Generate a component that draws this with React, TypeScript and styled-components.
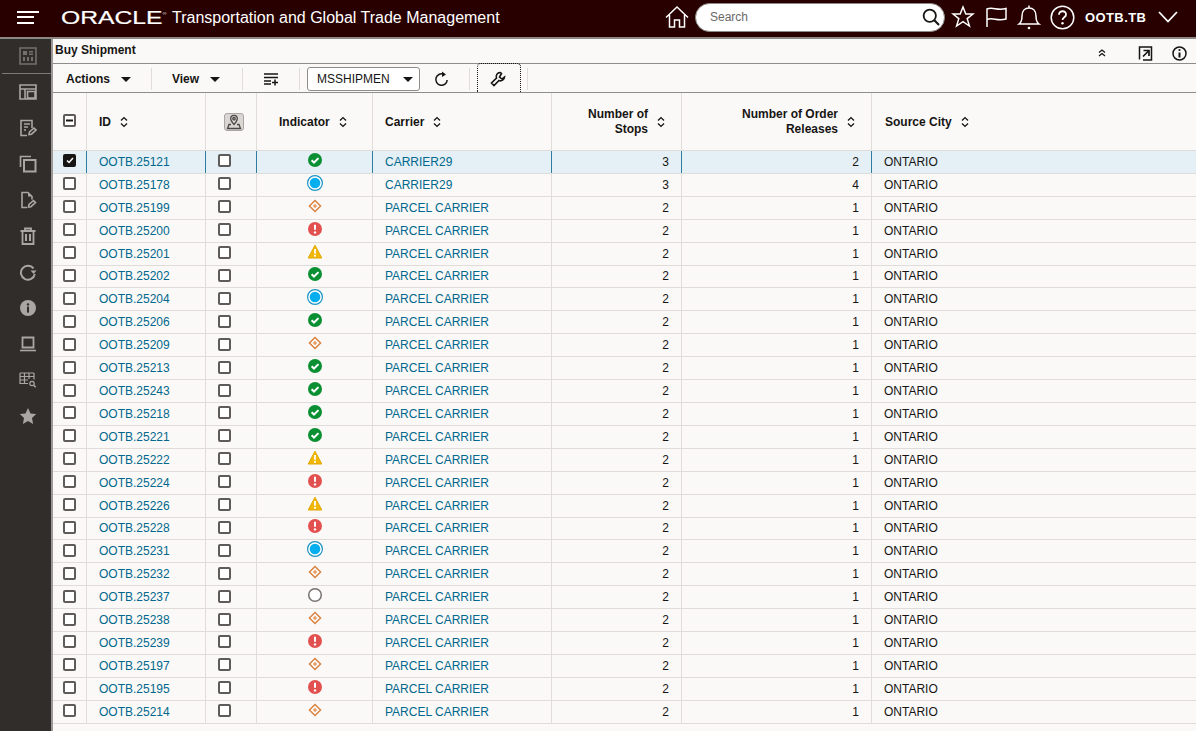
import React from "react";
import styled, { createGlobalStyle } from "styled-components";

const Global = createGlobalStyle`
  html, body { margin: 0; padding: 0; height: 100%; overflow: hidden; background: #fbf9f8; }
  * { box-sizing: border-box; }
  body { font-family: "Liberation Sans", Arial, sans-serif; font-size: 12px; color: #161513; }
`;

const Page = styled.div`
  width: 1196px; height: 731px; display: flex; flex-direction: column; overflow: hidden;
`;
const Header = styled.header`
  height: 39px; flex: none; background: #280000; border-bottom: 2px solid #8b8885;
  display: flex; align-items: center; color: #fff; padding-left: 17px;
`;
const Burger = styled.div`
  width: 22px; height: 13px; margin-top: -3px; display: flex; flex-direction: column; justify-content: space-between; flex: none;
  i { display: block; height: 2px; background: #fff; width: 17px; }
  i:first-child { width: 22px; }
`;
const Logo = styled.span`
  display: inline-block; margin-left: 22px; width: 102px; flex: none; font-size: 18px; line-height: 20px; margin-top: -2px;
  font-family: "Liberation Sans", Arial, sans-serif; transform-origin: left center; transform: scaleX(1.37);
  white-space: nowrap; -webkit-text-stroke: 0.2px #fff;
`;
const LogoMark = styled.sup`
  font-size: 4px; line-height: 0; vertical-align: 9px; -webkit-text-stroke: 0;
`;
const ProductName = styled.span`
  margin-left: 9px; font-size: 16px; white-space: nowrap; margin-top: -2px; width: 328px; flex: none;
`;
const HeaderRight = styled.div`
  margin-left: auto; display: flex; align-items: center; height: 100%; padding-right: 18px;
`;
const HeadIcon = styled.svg<{ $ml: number }>`
  flex: none; margin-left: ${(p) => p.$ml}px; margin-top: -3px; fill: none; stroke: #fff;
`;
const SearchBox = styled.div`
  width: 250px; height: 29px; margin-left: 6px; margin-top: -3px; border-radius: 15px; background: #fff; border: 1px solid #8b8885;
  display: flex; align-items: center; justify-content: space-between; padding: 0 4px 0 14px; color: #6b6966; font-size: 12px;
`;
const UserName = styled.span`
  margin-left: 10px; font-weight: 700; font-size: 13px; letter-spacing: 0.4px; margin-top: -3px; white-space: nowrap; width: 61px; flex: none;
`;
const Body = styled.div`
  flex: 1; display: flex; min-height: 0;
`;
const Side = styled.nav`
  width: 53px; flex: none; background: #312d2a; border-right: 2px solid #9b9895; display: flex; flex-direction: column; align-items: center;
`;
const SideTop = styled.div`
  height: 34px; width: 100%; display: flex; align-items: center; justify-content: center; opacity: 0.55; padding-left: 5px;
`;
const SideRule = styled.div`
  height: 1px; width: 49px; background: #7d7a77; margin-left: 2px; flex: none;
`;
const SideItem = styled.div`
  height: 36px; width: 100%; display: flex; align-items: center; justify-content: center; flex: none; padding-left: 5px;
`;
const SideSvg = styled.svg`
  width: 18px; height: 18px; fill: none; stroke: #a9a6a3; stroke-width: 1.6;
  .s { fill: #a9a6a3; stroke: none; }
`;
const Main = styled.main`
  flex: 1; min-width: 0; display: flex; flex-direction: column; background: #fbf9f8;
`;
const TitleBar = styled.div`
  height: 25px; flex: none; border-bottom: 1px solid #8f8d8b; display: flex; align-items: center; padding: 0 9px 0 2px;
`;
const Title = styled.h1`
  margin: -3px 0 0; font-size: 12px; font-weight: 700; flex: 1;
`;
const TitleIcon = styled.svg<{ $ml: number }>`
  flex: none; margin-left: ${(p) => p.$ml}px; margin-top: 4px; fill: none; stroke: #161513;
`;
const Toolbar = styled.div`
  height: 29px; flex: none; border-bottom: 1px solid #8f8d8b; display: flex; align-items: center; padding: 2px 0 0 13px;
`;
const Menu = styled.div<{ $w: number; $pl?: number }>`
  font-weight: 700; width: ${(p) => p.$w}px; padding-left: ${(p) => p.$pl ?? 0}px; display: flex; align-items: center; flex: none;
`;
const Caret = styled.i<{ $ml: number; $mr?: number }>`
  display: block; margin-left: ${(p) => p.$ml}px; margin-right: ${(p) => p.$mr ?? 0}px; width: 0; height: 0;
  border-left: 5px solid transparent; border-right: 5px solid transparent; border-top: 5px solid #161513; margin-top: 1px;
`;
const Sep = styled.i<{ $ml?: number }>`
  display: block; width: 1px; height: 22px; background: #dfdcd9; flex: none; margin-left: ${(p) => p.$ml ?? 0}px;
`;
const Select = styled.div`
  width: 113px; height: 24px; margin-left: 7px; border: 1px solid #8f8d8b; border-radius: 3px; background: #fff; display: flex; align-items: center;
  padding-left: 9px; flex: none;
`;
const SelectText = styled.span`
  flex: 1;
`;
const ToolIcon = styled.svg<{ $ml: number }>`
  flex: none; margin-left: ${(p) => p.$ml}px; fill: none; stroke: #161513;
`;
const WrenchBox = styled.div`
  width: 44px; height: 29px; margin: -3px 6px 0 7px; border: 1px dotted #161513; border-bottom: 0; border-radius: 4px 4px 0 0;
  display: flex; align-items: center; justify-content: center; flex: none;
  svg { margin-top: 2px; margin-right: 2px; }
`;
const cols = "34px 119px 51px 116px 179px 130px 190px 1fr";
const HeadRow = styled.div`
  display: grid; grid-template-columns: ${cols}; height: 58px; flex: none; border-bottom: 1px solid #dfdcd9;
`;
const HeadCell = styled.div<{ $pad?: number; $end?: boolean; $last?: boolean; $one?: boolean; $pr?: number }>`
  border-right: ${(p) => (p.$last ? "0" : "1px solid #dfdcd9")};
  display: flex; align-items: center; font-weight: 700; line-height: 15px; padding-left: ${(p) => p.$pad ?? 12}px;
  justify-content: ${(p) => (p.$end ? "flex-end" : "flex-start")};
  text-align: ${(p) => (p.$end ? "right" : "left")};
  padding-right: ${(p) => p.$pr ?? 0}px;
  padding-top: ${(p) => (p.$one ? 1 : 0)}px;
`;
const SortIcon = styled.svg`
  width: 10px; height: 12px; margin-left: 8px; flex: none; fill: none; stroke: #161513; stroke-width: 1.4;
`;
const Row = styled.div<{ $sel?: boolean }>`
  display: grid; grid-template-columns: ${cols}; height: 22.92px; flex: none; border-bottom: 1px solid #dfdcd9;
  background: ${(p) => (p.$sel ? "#e4f0f6" : "transparent")};
`;
const Cell = styled.div<{ $sel?: boolean; $end?: boolean; $center?: boolean; $link?: boolean; $last?: boolean }>`
  display: flex; align-items: center; min-width: 0; white-space: nowrap; padding: ${(p) => (p.$end ? "0 12px 0 0" : p.$center ? "0" : "0 0 0 12px")};
  justify-content: ${(p) => (p.$end ? "flex-end" : p.$center ? "center" : "flex-start")};
  border-right: ${(p) => (p.$last ? "0" : p.$sel ? "1px solid #2f7ea0" : "1px solid #dfdcd9")};
  color: ${(p) => (p.$link ? "#00688c" : "#161513")};
`;
const Check = styled.span<{ $on?: boolean }>`
  width: 13px; height: 13px;
  border: 2px solid ${(p) => (p.$on ? "#161513" : "#5f5b58")}; border-radius: 2px; background: ${(p) => (p.$on ? "#161513" : "#fff")};
  display: flex; align-items: center; justify-content: center; flex: none; margin-bottom: 2px;
`;
const StatusSvg = styled.svg`
  width: 18px; height: 18px; flex: none; margin-top: -4px;
`;
const MapBtn = styled.span`
  width: 20px; height: 18px; border: 1px solid #a9a6a3; border-radius: 3px; background: #d9d6d3; display: flex; align-items: center; justify-content: center; margin-top: 1px;
`;

type Kind = "g" | "b" | "d" | "r" | "w" | "e";
const Status = ({ k }: { k: Kind }) => {
  if (k === "g")
    return (
      <StatusSvg viewBox="0 0 18 18">
        <circle cx="9" cy="9" r="7" fill="#0a9033" />
        <path d="M5.6 9.2l2.4 2.3 4.5-4.4" fill="none" stroke="#fff" strokeWidth="2" />
      </StatusSvg>
    );
  if (k === "b")
    return (
      <StatusSvg viewBox="0 0 18 18">
        <circle cx="9" cy="9" r="7.4" fill="#fff" stroke="#1a93c2" strokeWidth="1.2" />
        <circle cx="9" cy="9" r="5.3" fill="#04aeef" />
      </StatusSvg>
    );
  if (k === "d")
    return (
      <StatusSvg viewBox="0 0 18 18">
        <path d="M9 3.4L14.6 9 9 14.6 3.4 9z" fill="none" stroke="#d9803c" strokeWidth="1.4" />
        <path d="M9 6.8l2.2 2.2L9 11.200 6.800 9z" fill="#e8a06a" />
      </StatusSvg>
    );
  if (k === "r")
    return (
      <StatusSvg viewBox="0 0 18 18">
        <circle cx="9" cy="9" r="7" fill="#e2514f" />
        <path d="M9 4.8v5" stroke="#fff" strokeWidth="2" />
        <circle cx="9" cy="12.4" r="1.2" fill="#fff" />
      </StatusSvg>
    );
  if (k === "w")
    return (
      <StatusSvg viewBox="0 0 18 18">
        <path d="M9 2.200L15.800 15H2.200z" fill="#f2b705" stroke="#e0a800" strokeLinejoin="round" />
        <path d="M9 6v4.800" stroke="#fff" strokeWidth="1.8" />
        <circle cx="9" cy="12.800" r="1.100" fill="#fff" />
      </StatusSvg>
    );
  return (
    <StatusSvg viewBox="0 0 18 18">
      <circle cx="9" cy="9" r="6.3" fill="#fff" stroke="#75716e" strokeWidth="1.5" />
    </StatusSvg>
  );
};

const Sort = () => (
  <SortIcon viewBox="0 0 10 12">
    <path d="M2 4.400L5 1.600l3 2.800M2 7.600l3 2.800 3-2.800" />
  </SortIcon>
);

const data: [string, Kind][] = [
  ["25121", "g"], ["25178", "b"], ["25199", "d"], ["25200", "r"], ["25201", "w"],
  ["25202", "g"], ["25204", "b"], ["25206", "g"], ["25209", "d"], ["25213", "g"],
  ["25243", "g"], ["25218", "g"], ["25221", "g"], ["25222", "w"], ["25224", "r"],
  ["25226", "w"], ["25228", "r"], ["25231", "b"], ["25232", "d"], ["25237", "e"],
  ["25238", "d"], ["25239", "r"], ["25197", "d"], ["25195", "r"], ["25214", "d"],
];

const sideIcons: React.ReactNode[] = [
  <SideSvg viewBox="0 0 18 18" key="a"><path d="M1 2h16v14H1zM1 6h16M6 6v10M8.500 8.500H16V15H8.500z" /></SideSvg>,
  <SideSvg viewBox="0 0 18 18" key="b"><path d="M13 9V1.500H2v15h6M5 5h6M5 8h4M5 11h2" /><path d="M10 15.500l.5-2.500 4.500-4 2 2-4.500 4.200z" /></SideSvg>,
  <SideSvg viewBox="0 0 18 18" key="c"><path d="M1.500 12V1.500H12" /><path d="M5 5h11.500v11.500H5z" strokeWidth="2" /></SideSvg>,
  <SideSvg viewBox="0 0 18 18" key="d"><path d="M8 16.500H3v-15h6l4 4v3" /><path d="M9 1.500v4h4" className="s" /><path d="M9.500 16l.5-2.500 4.500-4 2 2-4.500 4.200z" /></SideSvg>,
  <SideSvg viewBox="0 0 18 18" key="e"><path d="M1.500 4h15M6 4V1.500h6V4M3.500 4v13h11V4" strokeWidth="1.8" /><path d="M7 7v7M11 7v7" strokeWidth="2" /></SideSvg>,
  <SideSvg viewBox="0 0 18 18" key="f"><path d="M14.500 5.500A7 7 0 1 0 15.800 11" strokeWidth="1.9" /><path className="s" d="M11.500 7.500h6l-2.800 3.600z" /></SideSvg>,
  <SideSvg viewBox="0 0 18 18" key="g"><circle className="s" cx="9" cy="9" r="8" /><rect x="8" y="7.600" width="2" height="6" fill="#312d2a" stroke="none" /><circle cx="9" cy="5.400" r="1.200" fill="#312d2a" stroke="none" /></SideSvg>,
  <SideSvg viewBox="0 0 18 18" key="h"><path d="M3.500 2.500h11v10h-11z" strokeWidth="1.8" /><path d="M1 15.500h16" strokeWidth="1.6" /></SideSvg>,
  <SideSvg viewBox="0 0 18 18" key="i"><path d="M1 2h14M1 2v10.500h8M1 5.500h14v3M1 9h8M5.500 2v10.500M10 2v6M15 2v3.500" strokeWidth="1.2" /><circle cx="13" cy="12.500" r="2.200" strokeWidth="1.2" /><path d="M14.700 14.200l2 2" strokeWidth="1.5" /></SideSvg>,
  <SideSvg viewBox="0 0 18 18" key="j"><path className="s" d="M9 1l2.500 5.400 5.700.7-4.200 4 1.100 5.900L9 14.100 3.900 17 5 11.100.8 7.100l5.700-.7z" /></SideSvg>,
];

export default function App() {
  return (
    <Page>
      <Global />
      <Header>
        <Burger><i /><i /><i /></Burger>
        <Logo>ORACLE<LogoMark>®</LogoMark></Logo>
        <ProductName>Transportation and Global Trade Management</ProductName>
        <HeaderRight>
          <HeadIcon $ml={0} width="24" height="24" viewBox="0 0 24 24" strokeWidth="1.5">
            <path d="M1 12.500L12 2l11 10.500M4.500 10v12H9.500v-7h5v7H19.500V10" />
          </HeadIcon>
          <SearchBox>
            Search
            <svg width="18" height="18" viewBox="0 0 22 22" fill="none" stroke="#161513" strokeWidth="2.2">
              <circle cx="9.500" cy="9.500" r="7.500" />
              <path d="M14.800 14.800l6 6" strokeWidth="2.6" />
            </svg>
          </SearchBox>
          <HeadIcon $ml={6} width="24" height="24" viewBox="0 0 24 24" strokeWidth="1.500">
            <path d="M12 2l2.800 7h7.200l-5.800 4.600 2.200 7.400-6.400-4.400L5.600 21l2.200-7.400L2 9h7.200z" />
          </HeadIcon>
          <HeadIcon $ml={9} width="24" height="24" viewBox="0 0 24 24" stroke="#a9a6a3" strokeWidth="1.500">
            <path d="M3 22V4c6-2.500 10 2 19-.5V14c-9 2.500-13-2-19 .5" />
          </HeadIcon>
          <HeadIcon $ml={9} width="24" height="26" viewBox="0 0 24 26" strokeWidth="1.500">
            <path d="M2 20h20c-3-2-3-5-3-8 0-5-3-8-7-8s-7 3-7 8c0 3 0 6-3 8zM12 1.500v2.500" />
            <circle cx="12" cy="24" r="1.300" fill="#fff" stroke="none" />
          </HeadIcon>
          <HeadIcon $ml={9} width="25" height="25" viewBox="0 0 25 25" strokeWidth="1.500">
            <circle cx="12.500" cy="12.500" r="11.300" />
            <path d="M9 9.800c0-5 7.500-4.500 7 0 0 2.500-3.500 2.500-3.500 5.200" strokeWidth="1.800" />
            <circle cx="12.500" cy="18.300" r="1.200" fill="#fff" stroke="none" />
          </HeadIcon>
          <UserName>OOTB.TB</UserName>
          <HeadIcon $ml={12} width="20" height="12" viewBox="0 0 20 12" strokeWidth="1.800">
            <path d="M1 1l9 9.500L19 1" />
          </HeadIcon>
        </HeaderRight>
      </Header>
      <Body>
        <Side>
          <SideTop>
            <SideSvg viewBox="0 0 18 18"><path d="M1 1h16v16H1z" /><path d="M4 4h4v4H4zM10 4h4v1.500h-4zM10 6.500h4V8h-4zM4 10h2v4H4zM8 10h2v4H8zM12 10h2v4h-2z" className="s" /></SideSvg>
          </SideTop>
          <SideRule />
          {sideIcons.map((ic, i) => <SideItem key={i}>{ic}</SideItem>)}
        </Side>
        <Main>
          <TitleBar>
            <Title>Buy Shipment</Title>
            <TitleIcon $ml={0} width="10" height="10" viewBox="0 0 10 10" strokeWidth="1.300"><path d="M2 4.500l3-2.500 3 2.500M2 8l3-2.500L8 8" /></TitleIcon>
            <TitleIcon $ml={31} width="15" height="15" viewBox="0 0 15 15" strokeWidth="1.500"><path d="M8 1H1.500v12.500M1.500 1h12v13H5" /><path d="M5 10.500l5.500-5.500M5.500 4.500h5.500v5.500" strokeWidth="1.700" /></TitleIcon>
            <TitleIcon $ml={19} width="15" height="15" viewBox="0 0 15 15" strokeWidth="1.500"><circle cx="7.500" cy="7.500" r="6.500" /><path d="M7.500 6.500v5" strokeWidth="2" /><circle cx="7.500" cy="4" r="1.100" fill="#161513" stroke="none" /></TitleIcon>
          </TitleBar>
          <Toolbar>
            <Menu $w={85}>Actions<Caret $ml={11} /></Menu>
            <Sep />
            <Menu $w={90} $pl={20}>View<Caret $ml={11} /></Menu>
            <Sep />
            <ToolIcon $ml={20} width="16" height="14" viewBox="0 0 16 14" strokeWidth="1.500"><path d="M1 2h14M1 5.500h14M1 9h7M1 12h7M12 7.500v6M9 10.500h6" /></ToolIcon>
            <Sep $ml={20} />
            <Select>
              <SelectText>MSSHIPMEN</SelectText>
              <Caret $ml={0} $mr={6} />
            </Select>
            <ToolIcon $ml={14} width="15" height="16" viewBox="0 0 15 16" strokeWidth="1.500">
              <path d="M9.500 3.200A5.700 5.700 0 1 0 13.200 9" />
              <path d="M8 0.500l4 3-4 2.500z" fill="#161513" stroke="none" />
            </ToolIcon>
            <Sep $ml={20} />
            <WrenchBox>
              <svg width="16" height="16" viewBox="0 0 16 16" fill="none" stroke="#161513" strokeWidth="1.600">
                <path d="M10 1.500a4 4 0 0 0-3.500 5.500L1.500 12l2.500 2.500 5-5A4 4 0 0 0 14.500 6l-2.500 2-2.500-2 2-3.500a4 4 0 0 0-1.500-1z" />
              </svg>
            </WrenchBox>
            <Sep />
          </Toolbar>
          <HeadRow>
            <HeadCell $pad={10}>
              <Check><svg width="7" height="3" viewBox="0 0 7 3"><rect width="7" height="2" y="0.500" fill="#161513" /></svg></Check>
            </HeadCell>
            <HeadCell $one>ID<Sort /></HeadCell>
            <HeadCell $pad={18}>
              <MapBtn>
                <svg width="16" height="16" viewBox="0 0 16 16" fill="none" stroke="#4a4744" strokeWidth="1.300">
                  <path d="M8 10.500C6 8 4.700 6.500 4.700 4.700a3.300 3.300 0 0 1 6.600 0C11.300 6.500 10 8 8 10.500z" />
                  <circle cx="8" cy="4.700" r="1.200" />
                  <path d="M5 10.500H3L1.500 14.500h13L13 10.500h-2" />
                </svg>
              </MapBtn>
            </HeadCell>
            <HeadCell $pad={22} $one>Indicator<Sort /></HeadCell>
            <HeadCell $one>Carrier<Sort /></HeadCell>
            <HeadCell $end $pr={15}>Number of<br />Stops<Sort /></HeadCell>
            <HeadCell $end $pr={15}>Number of Order<br />Releases<Sort /></HeadCell>
            <HeadCell $last $one $pad={13}>Source City<Sort /></HeadCell>
          </HeadRow>
          {data.map(([id, k], i) => {
            const sel = i === 0;
            const r = i < 2;
            return (
              <Row key={id} $sel={sel}>
                <Cell $sel={sel} $center>
                  <Check $on={sel}>
                    {sel && <svg width="8" height="7" viewBox="0 0 8 7" fill="none" stroke="#fff" strokeWidth="1.500"><path d="M1 3.500l2 2 4-4.500" /></svg>}
                  </Check>
                </Cell>
                <Cell $sel={sel} $link>OOTB.{id}</Cell>
                <Cell $sel={sel}><Check /></Cell>
                <Cell $sel={sel} $center><Status k={k} /></Cell>
                <Cell $sel={sel} $link>{r ? "CARRIER29" : "PARCEL CARRIER"}</Cell>
                <Cell $sel={sel} $end>{r ? 3 : 2}</Cell>
                <Cell $sel={sel} $end>{i === 0 ? 2 : i === 1 ? 4 : 1}</Cell>
                <Cell $sel={sel} $last>ONTARIO</Cell>
              </Row>
            );
          })}
        </Main>
      </Body>
    </Page>
  );
}
